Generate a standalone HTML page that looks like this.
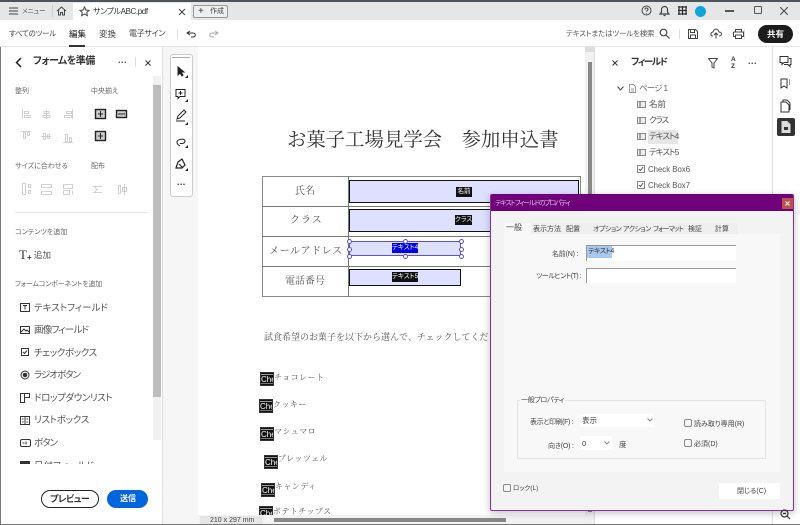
<!DOCTYPE html>
<html lang="ja"><head><meta charset="utf-8"><style>
html,body{margin:0;padding:0;background:#fff}
#r{position:relative;width:800px;height:525px;overflow:hidden;background:#fff;font-family:"Liberation Sans","Noto Sans CJK JP",sans-serif;color:#444;font-feature-settings:"palt";filter:blur(.35px)}
#r div,#r svg{position:absolute}
.t{white-space:nowrap;line-height:12px;height:12px;font-size:9px}
.s{font-family:"Liberation Serif","Noto Serif CJK SC",serif;color:#555;white-space:nowrap;font-feature-settings:normal}
.f{background:#dde1ff;box-sizing:border-box;border:1.500px solid #111}
.bl{background:#111;color:#fff;font-size:6.500px;line-height:10px;height:10px;white-space:nowrap;text-align:center}
.che{background:#111;color:#fff;width:14px;height:14px;font-size:8px;line-height:14px;text-align:left;overflow:hidden;box-sizing:border-box;border:1px solid #333;box-shadow:inset 0 1px 0 #111,inset 0 2px 0 #999,inset 0 -1px 0 #111,inset 0 -2px 0 #777}
svg{fill:none;stroke:#444;stroke-width:1}
.ti{color:#555}
.cb{width:8px;height:8px;box-sizing:border-box;border:1px solid #888;border-radius:2px;background:#f6f6f6}
.h{width:3px;height:3px;border:1px solid #5a50e0;border-radius:50%;background:#fff}
</style></head><body><div id="r">

<!-- top chrome -->
<div style="left:0;top:0;width:800px;height:2px;background:#4b555c"></div>
<div style="left:0;top:2px;width:800px;height:18px;background:#e6e6e6"></div>
<div style="left:73px;top:3px;width:118px;height:17px;background:#fff"></div>
<svg style="left:9px;top:7px" width="9" height="8"><path d="M0 1h9M0 4h9M0 7h9"/></svg>
<div class="t" style="left:22px;top:6px;font-size:6.500px;color:#555">メニュー</div>
<div style="left:52px;top:5px;width:1px;height:12px;background:#ccc"></div>
<svg style="left:56px;top:6px" width="11" height="10"><path d="M1 5L5.500 1L10 5M2.500 4v5h2V6.500h2V9h2V4"/></svg>
<svg style="left:79px;top:6px" width="11" height="11"><path d="M5.500 1l1.400 3 3.200.4-2.400 2.100.7 3.200-2.900-1.600-2.900 1.600.7-3.200L1 4.400l3.100-.4z"/></svg>
<div class="t" style="left:93px;top:6px;font-size:8px;letter-spacing:-.4px;color:#333">サンプルABC.pdf</div>
<svg style="left:178px;top:8px" width="8" height="8"><path d="M1 1l6 6M7 1l-6 6"/></svg>
<div style="left:193px;top:5px;width:35px;height:13px;box-sizing:border-box;border:1px solid #999;border-radius:2px;background:#eee"></div>
<div class="t" style="left:198px;top:6px;font-size:10px;color:#333">+</div>
<div class="t" style="left:210px;top:6px;font-size:7px;color:#444">作成</div>

<svg style="left:641px;top:5px" width="11" height="11"><circle cx="5.500" cy="5.500" r="4.500"/><path d="M4 4.500c0-2 3-2 3 0 0 1-1.500 1-1.500 2.200M5.500 8v.8"/></svg>
<svg style="left:659px;top:5px" width="11" height="12"><path d="M1 9h9L8.500 7V4.500a3 3 0 0 0-6 0V7zM4.500 10.500h2" stroke-width="1.200"/></svg>
<svg style="left:678px;top:6px" width="9" height="9"><path d="M0 1h9M0 4.500h9M0 8h9M1 0v9M4.500 0v9M8 0v9" stroke-width="1.300" stroke="#333"/></svg>
<div style="left:695px;top:6px;width:11px;height:11px;border-radius:50%;background:#0ea5d8"></div>
<div style="left:725px;top:10px;width:9px;height:1.500px;background:#555"></div>
<div style="left:754px;top:6px;width:6px;height:6px;border:1px solid #555;border-radius:1px"></div>
<svg style="left:780px;top:7px" width="8" height="8"><path d="M0 0l8 8M8 0l-8 8"/></svg>

<!-- toolbar -->
<div style="left:0;top:46px;width:800px;height:1px;background:#e4e4e4"></div>
<div class="t" style="left:9px;top:28px;font-size:7.500px;letter-spacing:-.3px">すべてのツール</div>
<div class="t" style="left:69px;top:28px;font-size:8.500px;color:#222">編集</div>
<div style="left:69px;top:45px;width:16px;height:1.500px;background:#333"></div>
<div class="t" style="left:99px;top:28px;font-size:8.500px">変換</div>
<div class="t" style="left:129px;top:28px;font-size:8px;letter-spacing:-.3px">電子サイン</div>
<div style="left:177px;top:29px;width:1px;height:10px;background:#ddd"></div>
<svg style="left:186px;top:30px" width="11" height="8"><path d="M4 1L1 3l3 2M1 3h6c3 0 3 4 0 4H5" stroke="#333"/></svg>
<svg style="left:208px;top:30px" width="11" height="8"><path d="M7 1l3 2-3 2M10 3H4C1 3 1 7 4 7h2" stroke="#aaa"/></svg>
<div class="t" style="left:566px;top:28px;font-size:7.500px;letter-spacing:-.2px;color:#555">テキストまたはツールを検索</div>
<svg style="left:659px;top:28px" width="11" height="11"><circle cx="4.500" cy="4.500" r="3.300" stroke-width="1.200"/><path d="M7 7l3.500 3.500" stroke-width="1.200"/></svg>
<div style="left:679px;top:29px;width:1px;height:10px;background:#ddd"></div>
<svg style="left:688px;top:29px" width="10" height="10"><path d="M.5.5h7l2 2v7H.5zM2.500.5v3h4v-3M2.500 9.500v-3.500h5v3.500"/></svg>
<svg style="left:710px;top:28px" width="12" height="11"><path d="M3 8C1 8 .5 6.500 1 5.500S2.500 4 3 4c.5-2 2-3 3-3s2.500 1 3 3c1.500 0 2.500 1 2.500 2S10.500 8 9 8M6 10.500V5M4 7l2-2 2 2"/></svg>
<svg style="left:733px;top:29px" width="11" height="10"><path d="M2.500 3V.5h6V3M.5 3h10v4.500h-2M2.500 7.500h-2V3M2.500 6h6v3.500h-6z"/></svg>
<div style="left:744px;top:29px;width:1px;height:10px;background:#ddd"></div>
<div style="left:758px;top:25px;width:35px;height:18px;background:#1c1c1c;border-radius:9px"></div>
<div class="t" style="left:767px;top:28px;font-size:8.500px;color:#fff;font-weight:bold">共有</div>

<!-- left panel -->
<div style="left:0;top:47px;width:1px;height:478px;background:#777"></div>
<div style="left:162px;top:47px;width:1px;height:478px;background:#ddd"></div>
<div style="left:163px;top:47px;width:35px;height:478px;background:#f6f6f6"></div>
<svg style="left:15px;top:57px" width="7" height="11"><path d="M6 1L1.500 5.500 6 10" stroke="#222" stroke-width="1.500"/></svg>
<div class="t" style="left:33px;top:56px;font-size:10px;letter-spacing:-.5px;font-weight:bold;color:#333">フォームを準備</div>
<div class="t" style="left:118px;top:54px;font-size:9px;color:#444;letter-spacing:.5px;font-weight:bold">...</div>
<div style="left:135px;top:57px;width:1px;height:10px;background:#ddd"></div>
<svg style="left:145px;top:60px" width="6" height="6"><path d="M.5.5l5 5M5.500.5l-5 5" stroke="#333"/></svg>
<div style="left:153px;top:76px;width:8px;height:364px;background:#f1f1f1"></div>
<div style="left:153px;top:85px;width:8px;height:312px;background:#bdbdbd"></div>
<div class="t" style="left:15px;top:86px;font-size:7px;color:#666">整列</div>
<div class="t" style="left:91px;top:86px;font-size:7px;color:#666">中央揃え</div>
<div class="t" style="left:15px;top:161px;font-size:7px;color:#666">サイズに合わせる</div>
<div class="t" style="left:91px;top:161px;font-size:7px;color:#666">配布</div>

<svg style="left:20px;top:108px" width="110" height="36"><g stroke="#c4c4c4" stroke-width=".8"><path d="M2.500 1v10M4.500 3.500h4v2h-4zM4.500 7.500h6v2h-6z"/><path d="M26.500 1v10M24 3.500h5v2h-5zM23 7.500h7v2h-7z"/><path d="M52.500 1v10M46.500 3.500h5v2h-5zM44.500 7.500h7v2h-7z"/><path d="M1 23.500h10M3.500 24.500v6h2v-6zM7.500 24.500v3h2v-3z"/><path d="M21 28.500h10M23.500 25.500h2v6h-2zM27.500 26.500h2v4h-2z"/><path d="M43 34.500h10M45.500 26.500h2v7h-2zM49.500 29.500h2v4h-2z"/></g><g stroke="#222"><rect x="75.500" y="1.500" width="10" height="9" fill="#ccc" stroke-width="1.400"/><path d="M78 6h5M80.500 3v6"/><rect x="96.500" y="2.500" width="10" height="7" fill="#ccc" stroke-width="1.400"/><path d="M98 6h7"/><rect x="75.500" y="23.500" width="10" height="9" fill="#ccc" stroke-width="1.400"/><path d="M78 28h5M80.500 25v6"/></g></svg>
<svg style="left:20px;top:182px" width="110" height="14"><g stroke="#c4c4c4" stroke-width=".8"><path d="M2.500 1.500h3v11h-3zM8.500 2.500h2v3h-2zM8.500 8.500h2v3h-2z"/><path d="M21.500 2.500h10v3h-10zM21.500 9.500h10v3h-10z"/><path d="M43.500 2.500h9v4h-9zM43.500 8.500h6v4h-6zM52.500 8.500v4"/><path d="M73 4.500h9M73 10.500h9M75.500 4.500c0 2 0 2 2 3-2 1-2 1-2 3"/><path d="M98.500 3.500h2v8h-2zM104.500 2v11M102.500 5.500h4v4h-4z"/></g></svg>

<div style="left:15px;top:212px;width:133px;height:1px;background:#e6e6e6"></div>
<div class="t" style="left:15px;top:227px;font-size:7px;color:#666">コンテンツを追加</div>
<div class="t" style="left:19px;top:248px;font-size:13px;font-family:'Liberation Serif',serif;color:#333;line-height:14px;height:14px">T</div>
<div class="t" style="left:27px;top:252px;font-size:8px;color:#333;font-weight:bold">+</div>
<div class="t" style="left:34px;top:249px;font-size:8.500px;color:#555">追加</div>
<div class="t" style="left:15px;top:279px;font-size:7px;letter-spacing:-.2px;color:#666">フォームコンポーネントを追加</div>

<svg style="left:19px;top:300px" width="13" height="170"><g stroke="#333"><rect x="1.500" y="3.500" width="9" height="8"/><path d="M4 5.500h4M6 5.500v4"/><rect x="1.500" y="26.500" width="9" height="7"/><path d="M2 32l3-3 2 2 1-1 2 2"/><rect x="2.500" y="48.500" width="7" height="7"/><path d="M4 52l1.500 1.500L8 50.500"/><circle cx="6" cy="75" r="4"/><circle cx="6" cy="75" r="1.800" fill="#333"/><rect x="1.500" y="93.500" width="4" height="9"/><path d="M5.500 93.500h5v4h-5"/><rect x="1.500" y="116.500" width="9" height="8"/><path d="M6 116.500v8M3 119h1.500M3 122h1.500M7.500 119H9M7.500 122H9"/><rect x="1.500" y="139.500" width="10" height="7" rx="1.500"/><path d="M3.500 143h2M7 141.500v3"/></g></svg>
<div class="t ti" style="left:34px;top:303px;font-size:9.500px">テキストフィールド</div>
<div class="t ti" style="left:34px;top:325px;font-size:9.500px;letter-spacing:-.8px">画像フィールド</div>
<div class="t ti" style="left:34px;top:348px;font-size:9.500px;letter-spacing:-.4px">チェックボックス</div>
<div class="t ti" style="left:34px;top:370px;font-size:9.500px;letter-spacing:-1px">ラジオボタン</div>
<div class="t ti" style="left:34px;top:393px;font-size:9.500px;letter-spacing:-.4px">ドロップダウンリスト</div>
<div class="t ti" style="left:34px;top:415px;font-size:9.500px;letter-spacing:-.3px">リストボックス</div>
<div class="t ti" style="left:34px;top:438px;font-size:9.500px;letter-spacing:-1px">ボタン</div>
<div style="left:20px;top:461px;width:130px;height:3px;overflow:hidden"><div class="t ti" style="left:14px;top:0;font-size:9.500px">日付フィールド</div><div style="left:0;top:0;width:10px;height:3px;background:#333"></div></div>
<div style="left:41px;top:490px;width:58px;height:18px;box-sizing:border-box;border:1px solid #222;border-radius:9px;background:#fff"></div>
<div class="t" style="left:50px;top:493px;font-size:9px;letter-spacing:-.4px;font-weight:bold;color:#333">プレビュー</div>
<div style="left:107px;top:490px;width:41px;height:18px;border-radius:9px;background:#0265dc"></div>
<div class="t" style="left:120px;top:493px;font-size:8px;font-weight:bold;color:#fff">送信</div>

<!-- floating tools -->
<div style="left:170px;top:54px;width:21px;height:141px;border:1px solid #ccc;border-radius:3px;background:#fff"></div>
<div style="left:172px;top:57px;width:18px;height:1px;background:#aaa"></div>
<svg style="left:174px;top:64px" width="16" height="128"><g stroke="#222"><path d="M4 3v8l2-2 2 3 1-1-2-3h3z" fill="#222"/><path d="M2 25.500h9v7H6l-2 2v-2H2zM6.500 27v4M4.500 29h4"/><path d="M3 55l1-3 6-6 2 2-6 6zM2 57h9"/><path d="M3 78c0-3 8-4 8-1s-5 3-5 2M3 78c0 2 1 3 3 4" stroke-width="1"/><path d="M2 104l2-6 4-3 3 6-3 3zM5 100l4 4" stroke-width="1.200"/></g><g fill="#222" stroke="none"><path d="M14 11v3h-3zM14 35v3h-3zM14 58v3h-3zM14 81v3h-3zM14 104v3h-3z"/></g></svg>
<div class="t" style="left:177px;top:176px;font-size:9px;letter-spacing:.4px;color:#333;font-weight:bold">...</div>

<!-- page -->
<div class="s" style="left:287px;top:129px;font-size:19.400px;line-height:24px;color:#333">お菓子工場見学会　参加申込書</div>
<div style="left:262px;top:176px;width:319px;height:121px;box-sizing:border-box;border:1px solid #888"></div>
<div style="left:348px;top:176px;width:1px;height:121px;background:#777"></div>
<div style="left:262px;top:206px;width:319px;height:1px;background:#777"></div>
<div style="left:262px;top:236px;width:319px;height:1px;background:#777"></div>
<div style="left:262px;top:266px;width:319px;height:1px;background:#777"></div>
<div class="s" style="left:295px;top:185px;font-size:10px;line-height:14px">氏名</div>
<div class="s" style="left:290px;top:214px;font-size:10px;line-height:14px;letter-spacing:1px">クラス</div>
<div class="s" style="left:269px;top:245px;font-size:10px;line-height:14px;letter-spacing:.6px">メールアドレス</div>
<div class="s" style="left:285px;top:275px;font-size:10px;line-height:14px">電話番号</div>
<div class="f" style="left:349px;top:180px;width:230px;height:23px"></div>
<div class="f" style="left:349px;top:209px;width:230px;height:23px"></div>
<div style="left:349px;top:241px;width:112px;height:15px;background:#dde1ff;box-sizing:border-box;border:1px solid #5a50e0"></div>
<div class="f" style="left:349px;top:269px;width:112px;height:17px"></div>
<div class="bl" style="left:456px;top:187px;width:16px">名前</div>
<div class="bl" style="left:455px;top:215px;width:17px">クラス</div>
<div class="bl" style="left:392px;top:243px;width:26px;background:#0000e6">テキスト4</div>
<div class="bl" style="left:392px;top:272px;width:26px">テキスト5</div>
<div class="h" style="left:347px;top:239px"></div><div class="h" style="left:403px;top:239px"></div><div class="h" style="left:459px;top:239px"></div>
<div class="h" style="left:347px;top:247px"></div><div class="h" style="left:459px;top:247px"></div>
<div class="h" style="left:347px;top:254px"></div><div class="h" style="left:403px;top:254px"></div><div class="h" style="left:459px;top:254px"></div>

<div class="s" style="left:264px;top:331px;font-size:9px;line-height:13px;color:#555;width:226px;overflow:hidden">試食希望のお菓子を以下から選んで、チェックしてください。</div>
<div class="che" style="left:260px;top:372px">Che</div>
<div class="che" style="left:259px;top:399px">Che</div>
<div class="che" style="left:260px;top:427px">Che</div>
<div class="che" style="left:264px;top:455px">Che</div>
<div class="che" style="left:261px;top:483px">Che</div>
<div class="che" style="left:259px;top:506px">Che</div>
<div class="s" style="left:274px;top:372px;font-size:8px;line-height:12px;letter-spacing:.45px">チョコレート</div>
<div class="s" style="left:273px;top:399px;font-size:8px;line-height:12px;letter-spacing:.45px">クッキー</div>
<div class="s" style="left:274px;top:426px;font-size:8px;line-height:12px;letter-spacing:.45px">マシュマロ</div>
<div class="s" style="left:278px;top:453px;font-size:8px;line-height:12px;letter-spacing:.45px">プレッツェル</div>
<div class="s" style="left:275px;top:481px;font-size:8px;line-height:12px;letter-spacing:.45px">キャンディ</div>
<div class="s" style="left:273px;top:506px;font-size:8px;line-height:12px;letter-spacing:.45px">ポテトチップス</div>

<!-- bottom bars -->
<div style="left:198px;top:515px;width:397px;height:10px;background:#f3f3f3"></div>
<div style="left:200px;top:516px;width:63px;height:9px;background:#e6e6e6"></div>
<div class="t" style="left:210px;top:515px;font-size:7px;color:#444;line-height:11px">210 x 297 mm</div>
<div style="left:274px;top:518px;width:232px;height:4px;background:#888"></div>

<!-- vertical scroll -->
<div style="left:585px;top:47px;width:9px;height:478px;background:#f1f1f1"></div>
<div style="left:585px;top:47px;width:9px;height:5px;background:#ddd"></div>
<div style="left:588px;top:62px;width:4px;height:450px;background:#888"></div>
<div style="left:594px;top:47px;width:1px;height:478px;background:#ddd"></div>

<!-- fields panel -->
<svg style="left:612px;top:60px" width="6" height="6"><path d="M.5.5l5 5M5.500.5l-5 5" stroke="#333"/></svg>
<div class="t" style="left:631px;top:57px;font-size:9.500px;letter-spacing:-1.400px;font-weight:bold;color:#333">フィールド</div>
<svg style="left:708px;top:58px" width="10" height="11"><path d="M.5.500h9L6 5v5L4 9V5z"/></svg>
<div class="t" style="left:731px;top:56px;font-size:6.500px;line-height:7px;height:14px;color:#333;white-space:normal;width:6px;font-weight:bold">A Z</div>
<div class="t" style="left:748px;top:55px;font-size:9px;font-weight:bold;letter-spacing:.5px;color:#444">...</div>
<svg style="left:617px;top:86px" width="7" height="5"><path d="M.5.500L3.500 4 6.500.5"/></svg>
<svg style="left:629px;top:84px" width="7" height="9"><path d="M.5.500h4l2 2v6h-6zM2 5h3M2 7h3" stroke="#999"/></svg>
<div class="t" style="left:639px;top:82px;font-size:8.500px;letter-spacing:-.8px;color:#666">ページ 1</div>
<svg style="left:637px;top:99px" width="9" height="96"><g stroke="#888" fill="#eee"><rect x=".5" y="2.500" width="8" height="6"/><rect x=".5" y="18.500" width="8" height="6"/><rect x=".5" y="34.500" width="8" height="6"/><rect x=".5" y="50.500" width="8" height="6"/><rect x=".5" y="66.500" width="7" height="7" fill="#fff"/><rect x=".5" y="82.500" width="7" height="7" fill="#fff"/></g><path d="M2 70l1.500 1.500L6 68M2 86l1.500 1.500L6 84M3 3v5M3 19v5M3 35v5M3 51v5" stroke="#555"/></svg>
<div style="left:648px;top:130px;width:30px;height:14px;background:#e6e6e6"></div>
<div class="t" style="left:649px;top:98px;font-size:8.500px;color:#555">名前</div>
<div class="t" style="left:649px;top:114px;font-size:8.500px;letter-spacing:-1.200px;color:#555">クラス</div>
<div class="t" style="left:649px;top:130px;font-size:8.500px;letter-spacing:-1px;color:#555">テキスト4</div>
<div class="t" style="left:649px;top:146px;font-size:8.500px;letter-spacing:-1px;color:#555">テキスト5</div>
<div class="t" style="left:648px;top:164px;font-size:7.800px;color:#555">Check Box6</div>
<div class="t" style="left:648px;top:180px;font-size:7.800px;color:#555">Check Box7</div>

<!-- rail -->
<div style="left:772px;top:47px;width:1px;height:478px;background:#ddd"></div>
<svg style="left:779px;top:55px" width="13" height="62"><g stroke="#333"><path d="M1 1.500h8v6H5l-2 2v-2H1zM10 3.500h2v6h-1v2l-2-2H5"/><path d="M2 24h6v9l-3-2-3 2zM10 25h1M10 27h1M10 29h1"/><path d="M2 47h5l3 3v7H2zM4 47v-2h4l3 3v7"/></g></svg>
<div style="left:777px;top:118px;width:18px;height:18px;background:#333;border-radius:2px"></div>
<svg style="left:781px;top:121px" width="10" height="12"><path d="M1 .5h5l3 3v8H1z" fill="#ddd" stroke="#ddd"/><path d="M3 6h4v3H3z" fill="#333" stroke="none"/></svg>

<!-- dialog -->
<div style="left:490px;top:194px;width:304px;height:317px;box-sizing:border-box;background:#f3f3f3;border:1px solid #8b2fa0;border-radius:2px;box-shadow:0 2px 8px rgba(0,0,0,.25)"></div>
<div style="left:491px;top:194px;width:302px;height:17px;background:#6f007a;border-radius:2px 2px 0 0"></div>
<div class="t" style="left:495px;top:198px;font-size:7px;letter-spacing:-1.200px;color:#d8c4dc">テキストフィールドのプロパティ</div>
<div style="left:782px;top:198px;width:11px;height:11px;background:#c0504d"></div>
<svg style="left:785px;top:201px" width="5" height="5"><path d="M.5.5l4 4M4.500.5l-4 4" stroke="#fff"/></svg>

<div style="left:531px;top:223px;width:207px;height:11px;background:#efefef"></div>
<div style="left:504px;top:223px;width:27px;height:11px;background:#f8f8f8"></div>
<div style="left:504px;top:234px;width:276px;height:238px;background:#f8f8f8"></div>
<div class="t" style="left:506px;top:222px;font-size:8px;color:#444">一般</div>
<div class="t" style="left:533px;top:224px;font-size:7px;color:#444">表示方法</div>
<div class="t" style="left:566px;top:224px;font-size:7px;color:#444">配置</div>
<div class="t" style="left:593px;top:224px;font-size:7px;letter-spacing:-.5px;color:#444">オプション</div>
<div class="t" style="left:623px;top:224px;font-size:7px;letter-spacing:-.5px;color:#444">アクション</div>
<div class="t" style="left:653px;top:224px;font-size:7px;letter-spacing:-.9px;color:#444">フォーマット</div>
<div class="t" style="left:688px;top:224px;font-size:7px;color:#444">検証</div>
<div class="t" style="left:715px;top:224px;font-size:7px;color:#444">計算</div>

<div class="t" style="left:552px;top:249px;font-size:7px;letter-spacing:-.2px;color:#444">名前(N) :</div>
<div class="t" style="left:536px;top:271px;font-size:7px;letter-spacing:-.5px;color:#444">ツールヒント(T) :</div>
<div style="left:586px;top:245px;width:150px;height:16px;box-sizing:border-box;background:#fff;border-top:1px solid #999;border-left:1px solid #999"></div>
<div style="left:587px;top:246px;width:25px;height:12px;background:#a8c8ee"></div>
<div class="t" style="left:588px;top:246px;font-size:7px;letter-spacing:-.5px;color:#333">テキスト4</div>
<div style="left:586px;top:268px;width:150px;height:15px;box-sizing:border-box;background:#fff;border-top:1px solid #999;border-left:1px solid #999"></div>

<div style="left:517px;top:400px;width:249px;height:59px;box-sizing:border-box;border:1px solid #e4e4e4"></div>
<div class="t" style="left:520px;top:395px;font-size:7px;letter-spacing:-.3px;color:#444;background:#f8f8f8;padding:0 1px">一般プロパティ</div>
<div class="t" style="left:530px;top:417px;font-size:7px;letter-spacing:-.4px;color:#444">表示と印刷(F) :</div>
<div style="left:580px;top:414px;width:74px;height:13px;background:#fff"></div>
<div class="t" style="left:582px;top:415px;font-size:7.500px;color:#444">表示</div>
<svg style="left:647px;top:418px" width="6" height="4"><path d="M.5.5L3 3 5.500.5" stroke="#888"/></svg>
<div class="t" style="left:548px;top:441px;font-size:7px;letter-spacing:-.2px;color:#444">向き(O) :</div>
<div style="left:580px;top:436px;width:32px;height:14px;background:#fff"></div>
<div class="t" style="left:582px;top:438px;font-size:7.500px;color:#444">0</div>
<svg style="left:604px;top:441px" width="6" height="4"><path d="M.5.5L3 3 5.500.5" stroke="#888"/></svg>
<div class="t" style="left:619px;top:439px;font-size:7.500px;color:#444">度</div>
<div class="cb" style="left:684px;top:419px"></div>
<div class="t" style="left:694px;top:419px;font-size:7px;color:#444">読み取り専用(R)</div>
<div class="cb" style="left:684px;top:439px"></div>
<div class="t" style="left:694px;top:439px;font-size:7px;color:#444">必須(D)</div>
<div class="cb" style="left:503px;top:484px"></div>
<div class="t" style="left:513px;top:483px;font-size:6.500px;color:#444">ロック(L)</div>
<div style="left:719px;top:483px;width:61px;height:16px;background:#fff"></div>
<div class="t" style="left:737px;top:486px;font-size:7px;color:#444">閉じる(C)</div>

<svg style="left:780px;top:509px" width="11" height="11"><circle cx="4.500" cy="4.500" r="3.500" stroke="#333" stroke-width="1.200"/><path d="M7 7l3 3M3 4.500h3" stroke="#333" stroke-width="1.200"/></svg>
<div style="left:0;top:524px;width:800px;height:1px;background:#777"></div>
</div></body></html>
